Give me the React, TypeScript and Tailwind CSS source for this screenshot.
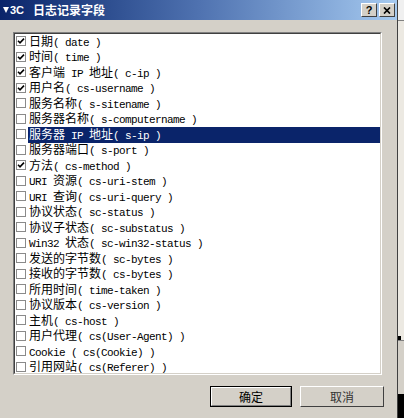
import React from "react";

type Field = { label: string; checked: boolean; selected?: boolean };

const fields: Field[] = [
  { label: "日期( date )", checked: true },
  { label: "时间( time )", checked: true },
  { label: "客户端 IP 地址( c-ip )", checked: true },
  { label: "用户名( cs-username )", checked: true },
  { label: "服务名称( s-sitename )", checked: false },
  { label: "服务器名称( s-computername )", checked: false },
  { label: "服务器 IP 地址( s-ip )", checked: false, selected: true },
  { label: "服务器端口( s-port )", checked: false },
  { label: "方法( cs-method )", checked: true },
  { label: "URI 资源( cs-uri-stem )", checked: false },
  { label: "URI 查询( cs-uri-query )", checked: false },
  { label: "协议状态( sc-status )", checked: false },
  { label: "协议子状态( sc-substatus )", checked: false },
  { label: "Win32 状态( sc-win32-status )", checked: false },
  { label: "发送的字节数( sc-bytes )", checked: false },
  { label: "接收的字节数( cs-bytes )", checked: false },
  { label: "所用时间( time-taken )", checked: false },
  { label: "协议版本( cs-version )", checked: false },
  { label: "主机( cs-host )", checked: false },
  { label: "用户代理( cs(User-Agent) )", checked: false },
  { label: "Cookie ( cs(Cookie) )", checked: false },
  { label: "引用网站( cs(Referer) )", checked: false },
];

const cjk = "font-['Noto_Sans_CJK_SC',sans-serif] text-[12px] leading-none";
const mono =
  "font-['Liberation_Mono','Noto_Sans_CJK_SC',monospace] text-[11px] tracking-[-0.6px] leading-none";

// SimSun-style mix: CJK full width, latin half width
function MixedText({ text }: { text: string }) {
  const parts = text.split(/([\u3000-\u9fff\uff00-\uffef]+)/).filter(Boolean);
  return (
    <span className="mb-[3px] whitespace-pre leading-none">
      {parts.map((p, i) =>
        /[\u3000-\u9fff]/.test(p) ? (
          <span key={i} className={cjk}>
            {p}
          </span>
        ) : (
          <span key={i} className={mono}>
            {p}
          </span>
        )
      )}
    </span>
  );
}

function CheckBox({ checked }: { checked: boolean }) {
  return (
    <span className="flex h-[10px] w-[10px] shrink-0 items-center justify-center border border-[#8a8a8a] bg-white">
      {checked && (
        <svg width="8" height="8" viewBox="0 0 8 8">
          <path d="M1 3.8 L3 5.8 L7 1.6" stroke="#000" strokeWidth="1.6" fill="none" />
        </svg>
      )}
    </span>
  );
}

function TitleButton({ children }: { children: React.ReactNode }) {
  return (
    <div className="flex h-[14px] w-[16px] items-center justify-center border border-t-white border-l-white border-r-[#404040] border-b-[#404040] bg-[#d4d0c8]">
      {children}
    </div>
  );
}

export default function App() {
  return (
    <div className="flex h-[418px] w-[404px] overflow-hidden bg-black">
      <div className="flex h-full w-[397px] flex-col bg-[#d4d0c8]">
        <div className="flex h-[20px] items-center bg-gradient-to-r from-[#0a246a] via-[#4f72b0] to-[#a6caf0] pl-[3px] pr-[2px]">
          <span className="flex items-center font-['Liberation_Sans',sans-serif] text-[11px] font-bold text-white">
            <svg width="6" height="8" viewBox="0 0 6 8" className="mr-[1px]">
              <path d="M0 1 H6 L3 7 Z" fill="#fff" />
            </svg>
            3C
          </span>
          <span className="ml-[9px] font-['Noto_Sans_CJK_SC',sans-serif] text-[12px] font-bold text-white">
            日志记录字段
          </span>
          <div className="ml-auto flex gap-[2px]">
            <TitleButton>
              <span className="font-['Liberation_Sans',sans-serif] text-[11px] font-bold leading-none text-black">?</span>
            </TitleButton>
            <TitleButton>
              <svg width="8" height="7" viewBox="0 0 8 7">
                <path d="M1 0.5 L7 6.5 M7 0.5 L1 6.5" stroke="#000" strokeWidth="1.7" />
              </svg>
            </TitleButton>
          </div>
        </div>

        <div className="pl-[13px] pt-[12px]">
          <div className="h-[343px] w-[369px] border border-t-[#808080] border-l-[#808080] border-r-white border-b-white">
            <div className="h-full w-full overflow-hidden border border-t-[#404040] border-l-[#404040] border-r-[#d4d0c8] border-b-[#d4d0c8] bg-white">
              {fields.map((f) => (
                <div key={f.label} className="flex h-[15.5px] items-center text-black">
                  <span className="mb-[1px] ml-[1px] mr-[2px]">
                    <CheckBox checked={f.checked} />
                  </span>
                  <div
                    className={
                      f.selected
                        ? "flex h-full flex-1 items-center bg-[#0a246a] pl-[1px] text-white"
                        : "flex h-full flex-1 items-center pl-[1px]"
                    }
                  >
                    <MixedText text={f.label} />
                  </div>
                </div>
              ))}
            </div>
          </div>
        </div>

        <div className="flex gap-[8px] pl-[210px] pt-[11px]">
          <button className="flex h-[21px] w-[82px] items-center justify-center border border-black bg-[#d4d0c8]">
            <span className="flex h-full w-full items-center justify-center border border-t-white border-l-white border-r-[#808080] border-b-[#808080]">
              <span className={cjk + " text-black"}>确定</span>
            </span>
          </button>
          <button className="flex h-[21px] w-[84px] items-center justify-center border border-t-white border-l-white border-r-[#404040] border-b-[#404040] bg-[#d4d0c8]">
            <span className={cjk + " text-[#333]"}>取消</span>
          </button>
        </div>
      </div>

      <div className="flex flex-1 flex-col border-l border-[#404040]">
        <div className="h-[20px] bg-[#f0f0f0]" />
        <div className="h-px bg-[#808080]" />
        <div className="h-[315px] bg-[#ece9e2]" />
        <div className="flex h-[4px] items-center bg-[#ece9e2]">
          <div className="h-[4px] w-[3px] bg-black" />
        </div>
        <div className="h-px bg-[#808080]" />
        <div className="h-[53px] bg-[#d4d0c8]" />
        <div className="flex-1 bg-black" />
      </div>
    </div>
  );
}
